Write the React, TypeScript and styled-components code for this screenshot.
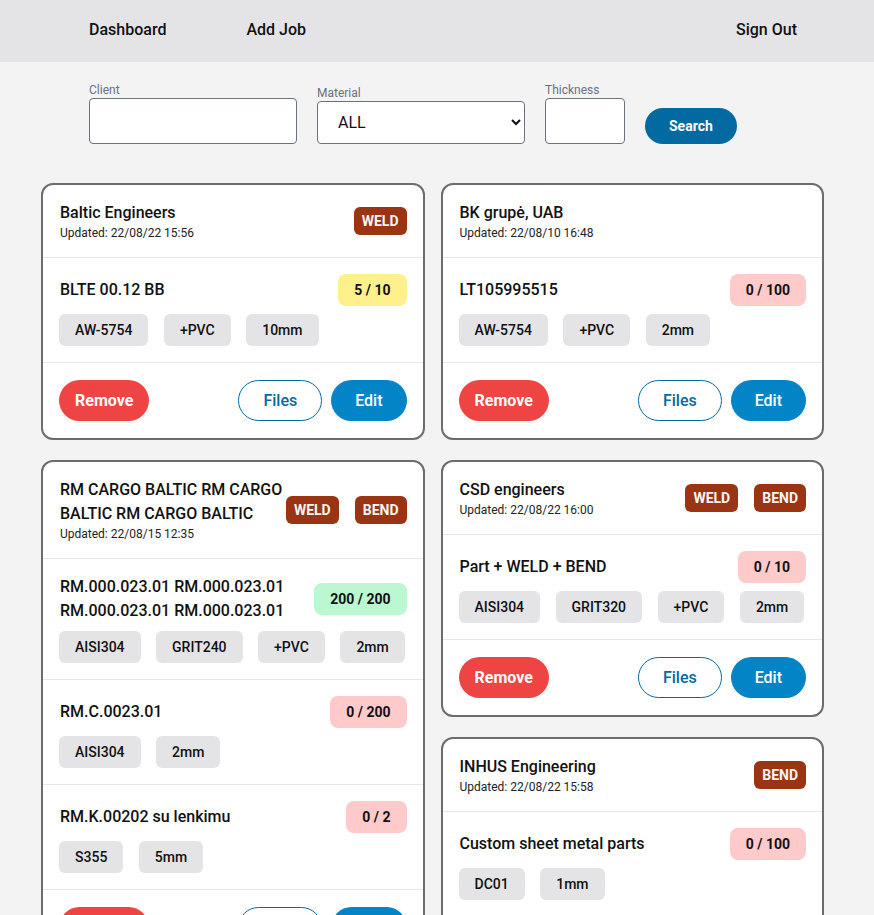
import React from "react";
import styled, { createGlobalStyle } from "styled-components";

const GlobalStyle = createGlobalStyle`
  * { box-sizing: border-box; }
  html, body { margin: 0; padding: 0; }
  body {
    background: #f3f3f3;
    font-family: Roboto, "Liberation Sans", Arial, sans-serif;
    color: #111111;
  }
`;

const NavBar = styled.nav`
  height: 62px;
  background: #e4e4e7;
  display: flex;
  align-items: center;
  justify-content: space-between;
  padding: 0 77px 4px 89px;
`;

const NavGroup = styled.div`
  display: flex;
  gap: 80px;
`;

const NavLink = styled.a`
  font-size: 16px;
  font-weight: 500;
  color: #111111;
  text-decoration: none;
  cursor: pointer;
`;

const FilterRow = styled.form`
  display: flex;
  align-items: flex-end;
  gap: 20px;
  padding: 21px 89px 0 89px;
`;

const Field = styled.label`
  display: flex;
  flex-direction: column;
  gap: 1px;
`;

const FieldLabel = styled.span`
  font-size: 12px;
  color: #6b7280;
  line-height: 14px;
`;

const TextInput = styled.input<{ $w: number }>`
  width: ${(p) => p.$w}px;
  height: 46px;
  border: 1px solid #6b7280;
  border-radius: 4px;
  background: #ffffff;
  font-family: inherit;
  font-size: 16px;
  padding: 0 12px;
`;

const Select = styled.select`
  width: 208px;
  height: 43px;
  border: 1px solid #6b7280;
  border-radius: 4px;
  background: #ffffff;
  font-family: inherit;
  font-size: 16px;
  color: #111111;
  padding: 0 12px 0 16px;
`;

const SearchButton = styled.button`
  height: 36px;
  padding: 0 24px;
  border: none;
  border-radius: 999px;
  background: #0369a1;
  color: #ffffff;
  font-family: inherit;
  font-size: 14px;
  font-weight: 700;
`;

const Board = styled.main`
  display: flex;
  gap: 16px;
  padding: 39px 0 0 41px;
  width: 824px;
`;

const Column = styled.div`
  flex: 1;
  display: flex;
  flex-direction: column;
  gap: 20px;
  min-width: 0;
`;

const Card = styled.section`
  background: #ffffff;
  border: 2px solid #6b6b70;
  border-radius: 12px;
  overflow: hidden;
`;

const CardHeader = styled.header`
  display: flex;
  align-items: center;
  padding: 16px 16px;
  border-bottom: 1px solid #e5e7eb;
`;

const TitleBlock = styled.div`
  flex: 1;
  min-width: 0;
  padding-left: 1px;
`;

const ClientName = styled.div`
  font-size: 16px;
  font-weight: 500;
  line-height: 24px;
`;

const Updated = styled.div`
  font-size: 12px;
  line-height: 16px;
  color: #222222;
`;

const TypeGroup = styled.div`
  display: flex;
  gap: 16px;
  flex-shrink: 0;
`;

const TypeBadge = styled.span`
  display: inline-flex;
  align-items: center;
  height: 28px;
  padding: 0 8px;
  border-radius: 6px;
  background: #9a3412;
  color: #f5f5f5;
  font-size: 14px;
  font-weight: 700;
`;

const Item = styled.div`
  padding: 16px 16px;
  border-bottom: 1px solid #e5e7eb;
  display: flex;
  flex-direction: column;
  gap: 8px;
`;

const ItemTop = styled.div`
  display: flex;
  align-items: center;
  gap: 16px;
  padding-left: 1px;
`;

const ItemName = styled.div`
  flex: 1;
  font-size: 16px;
  font-weight: 500;
  line-height: 24px;
`;

const countColors = {
  partial: "#fef08a",
  none: "#fecaca",
  done: "#bbf7d0",
};

const Count = styled.span<{ $state: keyof typeof countColors }>`
  display: inline-flex;
  align-items: center;
  height: 32px;
  padding: 0 16px;
  border-radius: 8px;
  background: ${(p) => countColors[p.$state]};
  font-size: 14px;
  font-weight: 700;
  flex-shrink: 0;
`;

const TagRow = styled.div`
  display: flex;
  flex-wrap: wrap;
  gap: 8px 15.5px;
`;

const Tag = styled.span`
  display: inline-flex;
  align-items: center;
  height: 32px;
  padding: 0 16px;
  border-radius: 6px;
  background: #e4e4e7;
  font-size: 14px;
  font-weight: 500;
`;

const CardFooter = styled.footer`
  display: flex;
  align-items: center;
  padding: 17px 16px;
`;

const Spacer = styled.div`
  flex: 1;
`;

const PillButton = styled.button<{ $variant: "danger" | "outline" | "primary" }>`
  height: 41px;
  border-radius: 999px;
  font-family: inherit;
  font-size: 16px;
  padding: 0 ${(p) => (p.$variant === "danger" ? 16 : 24)}px;
  font-weight: ${(p) => (p.$variant === "danger" ? 700 : 500)};
  border: ${(p) => (p.$variant === "outline" ? "1px solid #0369a1" : "none")};
  background: ${(p) =>
    p.$variant === "danger" ? "#ef4444" : p.$variant === "primary" ? "#0284c7" : "#ffffff"};
  color: ${(p) => (p.$variant === "outline" ? "#0369a1" : "#ffffff")};
  & + & {
    margin-left: 9px;
  }
`;

type JobItem = {
  name: string;
  done: number;
  total: number;
  tags: string[];
};

type Job = {
  client: string;
  updated: string;
  types: string[];
  items: JobItem[];
};

const leftJobs: Job[] = [
  {
    client: "Baltic Engineers",
    updated: "22/08/22 15:56",
    types: ["WELD"],
    items: [{ name: "BLTE 00.12 BB", done: 5, total: 10, tags: ["AW-5754", "+PVC", "10mm"] }],
  },
  {
    client: "RM CARGO BALTIC RM CARGO BALTIC RM CARGO BALTIC",
    updated: "22/08/15 12:35",
    types: ["WELD", "BEND"],
    items: [
      {
        name: "RM.000.023.01 RM.000.023.01 RM.000.023.01 RM.000.023.01",
        done: 200,
        total: 200,
        tags: ["AISI304", "GRIT240", "+PVC", "2mm"],
      },
      { name: "RM.C.0023.01", done: 0, total: 200, tags: ["AISI304", "2mm"] },
      { name: "RM.K.00202 su lenkimu", done: 0, total: 2, tags: ["S355", "5mm"] },
    ],
  },
];

const rightJobs: Job[] = [
  {
    client: "BK grupė, UAB",
    updated: "22/08/10 16:48",
    types: [],
    items: [{ name: "LT105995515", done: 0, total: 100, tags: ["AW-5754", "+PVC", "2mm"] }],
  },
  {
    client: "CSD engineers",
    updated: "22/08/22 16:00",
    types: ["WELD", "BEND"],
    items: [
      { name: "Part + WELD + BEND", done: 0, total: 10, tags: ["AISI304", "GRIT320", "+PVC", "2mm"] },
    ],
  },
  {
    client: "INHUS Engineering",
    updated: "22/08/22 15:58",
    types: ["BEND"],
    items: [{ name: "Custom sheet metal parts", done: 0, total: 100, tags: ["DC01", "1mm"] }],
  },
];

const stateOf = (i: JobItem): keyof typeof countColors =>
  i.done === i.total ? "done" : i.done === 0 ? "none" : "partial";

const JobCard = ({ job }: { job: Job }) => (
  <Card>
    <CardHeader>
      <TitleBlock>
        <ClientName>{job.client}</ClientName>
        <Updated>Updated: {job.updated}</Updated>
      </TitleBlock>
      <TypeGroup>
        {job.types.map((t) => (
          <TypeBadge key={t}>{t}</TypeBadge>
        ))}
      </TypeGroup>
    </CardHeader>
    {job.items.map((item) => (
      <Item key={item.name}>
        <ItemTop>
          <ItemName>{item.name}</ItemName>
          <Count $state={stateOf(item)}>
            {item.done} / {item.total}
          </Count>
        </ItemTop>
        <TagRow>
          {item.tags.map((t) => (
            <Tag key={t}>{t}</Tag>
          ))}
        </TagRow>
      </Item>
    ))}
    <CardFooter>
      <PillButton $variant="danger">Remove</PillButton>
      <Spacer />
      <PillButton $variant="outline">Files</PillButton>
      <PillButton $variant="primary">Edit</PillButton>
    </CardFooter>
  </Card>
);

export default function App() {
  return (
    <>
      <GlobalStyle />
      <NavBar>
        <NavGroup>
          <NavLink>Dashboard</NavLink>
          <NavLink>Add Job</NavLink>
        </NavGroup>
        <NavLink>Sign Out</NavLink>
      </NavBar>
      <FilterRow onSubmit={(e) => e.preventDefault()}>
        <Field>
          <FieldLabel>Client</FieldLabel>
          <TextInput $w={208} />
        </Field>
        <Field>
          <FieldLabel>Material</FieldLabel>
          <Select defaultValue="ALL">
            <option>ALL</option>
            <option>AISI304</option>
            <option>AW-5754</option>
            <option>S355</option>
            <option>DC01</option>
          </Select>
        </Field>
        <Field>
          <FieldLabel>Thickness</FieldLabel>
          <TextInput $w={80} />
        </Field>
        <SearchButton type="submit">Search</SearchButton>
      </FilterRow>
      <Board>
        <Column>
          {leftJobs.map((j) => (
            <JobCard key={j.client} job={j} />
          ))}
        </Column>
        <Column>
          {rightJobs.map((j) => (
            <JobCard key={j.client} job={j} />
          ))}
        </Column>
      </Board>
    </>
  );
}
